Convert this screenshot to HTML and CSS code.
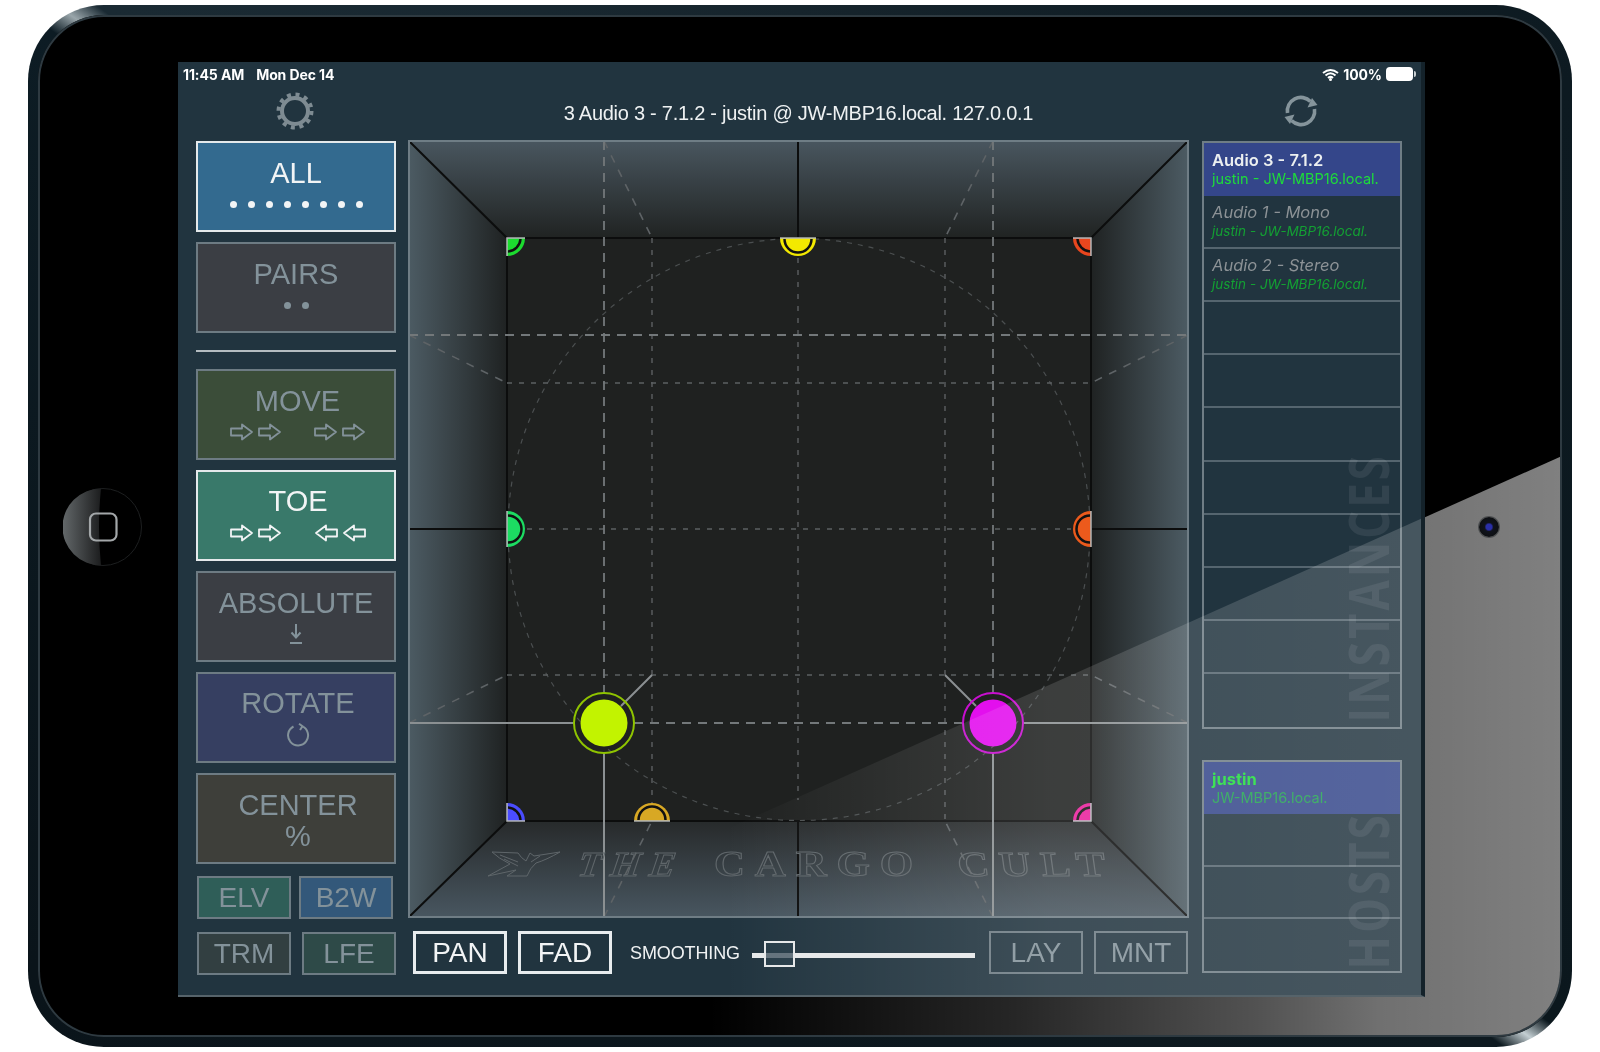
FILE: index.html
```html
<!DOCTYPE html>
<html lang="en">
<head>
<meta charset="utf-8">
<title>3D Panner</title>
<link rel="stylesheet" href="styles.css">
</head>
<body>
<div class="device">
  <div class="bezel">
    <div class="bezel-glare"></div>
    <div class="home-slot">
      <svg class="home" width="80" height="80" viewBox="0 0 80 80">
        <defs>
          <linearGradient id="homeGrad" x1="0" x2="1" y1="0" y2="0">
            <stop offset="0" stop-color="#63686a"/>
            <stop offset="1" stop-color="#1c1d1e"/>
          </linearGradient>
        </defs>
        <circle cx="40" cy="40" r="38.500" fill="#000" stroke="#1d1f20" stroke-width="1"/>
        <path d="M38 1.500 A38.500 38.500 0 0 0 38 78.500 Q34 40 38 1.500 Z" fill="url(#homeGrad)"/>
        <rect x="27" y="26.500" width="26.500" height="27" rx="6" fill="none" stroke="#a3a7a9" stroke-width="2.200"/>
      </svg>
    </div>
    <main class="screen">
      <header class="status">
        <div class="status-left"><span>11:45 AM</span><span>Mon Dec 14</span></div>
        <div class="status-right">
          <svg width="17" height="13" viewBox="0 0 17 13">
            <path d="M1 5 Q8.500 -1 16 5 M3.500 7.500 Q8.500 3 13.500 7.500 M6 10 Q8.500 7.800 11 10" fill="none" stroke="#fff" stroke-width="2"/>
            <circle cx="8.500" cy="11.500" r="1.500" fill="#fff"/>
          </svg>
          <span>100%</span>
          <span class="battery"></span>
        </div>
      </header>
      <div class="workspace">
        <div class="col-left">
          <div class="tool-icon">
            <svg width="38" height="38" viewBox="-19 -19 38 38">
              <circle r="13" fill="none" stroke="#7e8b92" stroke-width="4"/>
              <circle r="16.500" fill="none" stroke="#7e8b92" stroke-width="4" stroke-dasharray="4 4.640"/>
            </svg>
          </div>
          <div class="modes">
            <button class="mode all on"><span>ALL</span>
              <span class="glyphs dots"><i></i><i></i><i></i><i></i><i></i><i></i><i></i><i></i></span></button>
            <button class="mode pairs"><span>PAIRS</span>
              <span class="glyphs dots"><i></i><i></i></span></button>
            <div class="sep"></div>
            <button class="mode move"><span>MOVE</span>
              <span class="glyphs arrows">
                <svg width="136" height="18" viewBox="0 0 136 18"><defs><path id="arr" d="M1 5.500 H12 V1.500 L22 9 L12 16.500 V12.500 H1 Z" fill="none" stroke="currentColor" stroke-width="1.800" stroke-linejoin="round"/></defs>
                  <use href="#arr"/><use href="#arr" x="28"/><use href="#arr" x="84"/><use href="#arr" x="112"/></svg>
              </span></button>
            <button class="mode toe on shift"><span>TOE</span>
              <span class="glyphs arrows">
                <svg width="136" height="18" viewBox="0 0 136 18"><use href="#arr"/><use href="#arr" x="28"/><use href="#arr" transform="translate(108 0) scale(-1 1)"/><use href="#arr" transform="translate(136 0) scale(-1 1)"/></svg>
              </span></button>
            <button class="mode absolute"><span>ABSOLUTE</span>
              <span class="glyphs">
                <svg width="14" height="22" viewBox="0 0 14 22"><path d="M7 1 V14 M2.500 9.500 L7 14.500 L11.500 9.500 M1 20 H13" fill="none" stroke="currentColor" stroke-width="2"/></svg>
              </span></button>
            <button class="mode rotate shift"><span>ROTATE</span>
              <span class="glyphs">
                <svg width="24" height="24" viewBox="0 0 24 24"><path d="M7.500 3.500 A10 10 0 1 0 16 3.200 M13 0.800 L16.500 3.300 L14 7" fill="none" stroke="currentColor" stroke-width="2"/></svg>
              </span></button>
            <button class="mode center shift"><span>CENTER</span><span class="glyphs pct">%</span></button>
            <div class="mini-row first">
              <button class="mini elv">ELV</button>
              <button class="mini b2w">B2W</button>
            </div>
            <div class="mini-row second">
              <button class="mini trm">TRM</button>
              <button class="mini lfe">LFE</button>
            </div>
          </div>
        </div>

        <div class="col-center">
          <div class="title">3 Audio 3 - 7.1.2 - justin @ JW-MBP16.local. 127.0.0.1</div>
          <svg class="stage" width="779" height="776" viewBox="409 141 779 776">
            <defs>
              <linearGradient id="wallTop" x1="0" x2="0" y1="0" y2="1"><stop offset="0" stop-color="#49565f"/><stop offset="1" stop-color="#202322"/></linearGradient>
              <linearGradient id="wallBot" x1="0" x2="0" y1="0" y2="1"><stop offset="0" stop-color="#272a2b"/><stop offset="1" stop-color="#485660"/></linearGradient>
              <linearGradient id="wallL" x1="0" x2="1" y1="0" y2="0"><stop offset="0" stop-color="#4c5b63"/><stop offset="1" stop-color="#1f2222"/></linearGradient>
              <linearGradient id="wallR" x1="1" x2="0" y1="0" y2="0"><stop offset="0" stop-color="#4c5b63"/><stop offset="1" stop-color="#1f2222"/></linearGradient>
              <g id="q">
                <path d="M0 0 H18 A18 18 0 0 1 0 18 Z"/>
                <path d="M13.500 1 A13.500 13.500 0 0 1 1 13.500" fill="none" stroke="#111" stroke-width="2.500"/>
                <path d="M0 18 V0 H18" fill="none" stroke="#b5b8ba" stroke-width="1.500"/>
              </g>
              <g id="h">
                <path d="M-18 0 H18 A18 18 0 0 1 -18 0 Z"/>
                <path d="M-13.500 1 A13.500 13.500 0 0 0 13.500 1" fill="none" stroke="#111" stroke-width="2.500"/>
                <path d="M-18 0 H18" fill="none" stroke="#b5b8ba" stroke-width="1.500"/>
              </g>
            </defs>
            <rect x="507" y="238" width="584" height="583" fill="#1f2120"/>
            <polygon points="409,141 1188,141 1091,238 507,238" fill="url(#wallTop)"/>
            <polygon points="409,917 1188,917 1091,821 507,821" fill="url(#wallBot)"/>
            <polygon points="409,141 507,238 507,821 409,917" fill="url(#wallL)"/>
            <polygon points="1188,141 1091,238 1091,821 1188,917" fill="url(#wallR)"/>

            <g fill="none" stroke="#0c0d0d" stroke-width="2">
              <path d="M409 141 L507 238 M1188 141 L1091 238 M409 917 L507 821 M1188 917 L1091 821"/>
              <rect x="507" y="238" width="584" height="583"/>
              <path d="M798 141 V238 M798 821 V917 M409 529 H507 M1091 529 H1188"/>
            </g>

            <circle cx="799" cy="529.500" r="291" fill="none" stroke="#4b4f50" stroke-width="1.200" stroke-dasharray="5 6"/>

            <g fill="none" stroke="#5c6062" stroke-width="1.400" stroke-dasharray="5 7">
              <path d="M652 238 V821 M945 238 V821 M507 383 H1091 M507 675 H1091 M798 258 V800 M527 529 H1071"/>
            </g>
            <g fill="none" stroke="#5e6366" stroke-width="1.600" stroke-dasharray="8 8">
              <path d="M604 141 L652 238 M993 141 L945 238 M409 335 L507 383 M1188 335 L1091 383 M409 723 L507 675 M1188 723 L1091 675 M604 917 L652 821 M993 917 L945 821"/>
            </g>
            <g fill="none" stroke="#73787a" stroke-width="1.800" stroke-dasharray="9 7">
              <path d="M604 141 V693 M993 141 V693 M409 335 H1188 M634 723 H963"/>
            </g>
            <g fill="none" stroke="#8b9092" stroke-width="2">
              <path d="M409 723 H573 M1024 723 H1188 M604 753 V917 M993 753 V917 M621 706 L652 675 M976 706 L945 675"/>
            </g>

            <g class="logo">
              <path d="M492 852 L518 853 Q521 858 526 861 L530 853 L534 856 L560 852 Q546 860 536 863 Q530 868 527 876 L507 876 L516 870 L488 876 L510 864 Q498 858 492 852 Z M500 855 L518 862 M504 859 L518 866 M540 856 L531 862"/>
              <text x="577" y="876" textLength="106" lengthAdjust="spacingAndGlyphs" transform="translate(123 0) skewX(-8)" class="cult-word tilt">THE</text>
              <text x="714" y="876" textLength="209" lengthAdjust="spacingAndGlyphs" class="cult-word">CARGO</text>
              <text x="959" y="876" textLength="158" lengthAdjust="spacingAndGlyphs" transform="translate(-123 0) skewX(8)" class="cult-word">CULT</text>
            </g>

            <use href="#q" fill="#1cdc2f" transform="translate(507 238)"/>
            <use href="#h" fill="#f3e900" transform="translate(798 238)"/>
            <use href="#q" fill="#e8461e" transform="translate(1091 238) rotate(90)"/>
            <use href="#h" fill="#1cdc62" transform="translate(507 529) rotate(-90)"/>
            <use href="#h" fill="#ec5a1c" transform="translate(1091 529) rotate(90)"/>
            <use href="#q" fill="#4a4cff" transform="translate(507 821) rotate(-90)"/>
            <use href="#h" fill="#d8a824" transform="translate(652 821) rotate(180)"/>
            <use href="#q" fill="#ea1e9c" transform="translate(1091 821) rotate(180)"/>

            <circle cx="604" cy="723" r="30" fill="none" stroke="#8fc400" stroke-width="2"/>
            <circle cx="604" cy="723" r="23.500" fill="#c2f300"/>
            <circle cx="993" cy="723" r="30" fill="none" stroke="#c80fd0" stroke-width="2"/>
            <circle cx="993" cy="723" r="23.500" fill="#e30fee"/>
          </svg>
          <div class="transport">
            <button class="tbtn lit pan">PAN</button>
            <button class="tbtn lit fad">FAD</button>
            <span class="smooth-label">SMOOTHING</span>
            <div class="slider"><span class="thumb"></span></div>
            <button class="tbtn lay">LAY</button>
            <button class="tbtn mnt">MNT</button>
          </div>
        </div>

        <div class="col-right">
          <div class="tool-icon">
            <svg width="36" height="34" viewBox="-18 -17 36 34">
              <g fill="#85949b">
                <path d="M-13.500 2 A13.500 13.500 0 0 1 9.500 -9.500" fill="none" stroke="#85949b" stroke-width="3.600"/>
                <path d="M16.500 -6 L6.500 -3.500 L11 -13 Z"/>
                <path d="M13.500 -2 A13.500 13.500 0 0 1 -9.500 9.500" fill="none" stroke="#85949b" stroke-width="3.600"/>
                <path d="M-16.500 6 L-6.500 3.500 L-11 13 Z"/>
              </g>
            </svg>
          </div>
          <div class="panels">
            <section class="list instances">
              <span class="watermark wm-inst">INSTANCES</span>
              <div class="row selected"><strong>Audio 3 - 7.1.2</strong><small>justin - JW-MBP16.local.</small></div>
              <div class="row dim"><strong>Audio 1 - Mono</strong><small>justin - JW-MBP16.local.</small></div>
              <div class="row dim"><strong>Audio 2 - Stereo</strong><small>justin - JW-MBP16.local.</small></div>
              <div class="row"></div><div class="row"></div><div class="row"></div><div class="row"></div>
              <div class="row"></div><div class="row"></div><div class="row"></div><div class="row"></div>
            </section>
            <section class="list hosts">
              <span class="watermark wm-host">HOSTS</span>
              <div class="row selected host"><strong>justin</strong><small>JW-MBP16.local.</small></div>
              <div class="row"></div><div class="row"></div><div class="row"></div>
            </section>
          </div>
        </div>
      </div>
      <div class="screen-glare"></div>
    </main>
    <div class="camera-slot"><span class="camera"></span></div>
  </div>
</div>
</body>
</html>
```
FILE: styles.css
```css
* { box-sizing: border-box; }
html, body { margin: 0; background: #fff; }
body { width: 1600px; height: 1052px; overflow: hidden; font-family: "Liberation Sans", Arial, sans-serif; }

.device {
  width: 1544px;
  height: 1042px;
  margin: 5px 0 0 28px;
  padding: 10px;
  border-radius: 76px;
  background: conic-gradient(from 0deg at 50% 50%,
    #16242c 0deg, #0d1a21 60deg, #0b171d 123.500deg, #c3ced2 125deg, #0e1a20 126.500deg,
    #0a141a 240deg, #0d1c24 303.500deg, #9aa6ab 305deg, #1a2a33 306.500deg, #16242c 360deg);
}
.bezel {
  position: relative;
  height: 1022px;
  display: flex;
  align-items: flex-start;
  padding-top: 47px;
  border-radius: 66px;
  background: #000;
  overflow: hidden;
  box-shadow: inset 0 0 0 2px #2e3a41;
}
.bezel-glare {
  position: absolute;
  inset: 2px;
  border-radius: 64px;
  clip-path: polygon(1522px 439px, 222px 1020px, 1522px 1020px);
  background: linear-gradient(to left, rgba(255,255,255,.5) 0, rgba(255,255,255,.44) 12%, rgba(255,255,255,.32) 20%, rgba(255,255,255,.15) 36%, rgba(255,255,255,0) 56%);
}
.home-slot {
  position: relative;
  width: 140px;
  height: 935px;
  display: flex;
  align-items: center;
  padding: 0 0 6px 25px;
}
.camera-slot {
  position: relative;
  flex: 1;
  height: 935px;
  display: flex;
  align-items: center;
  padding: 0 0 6px 54px;
}
.camera {
  width: 20px;
  height: 20px;
  border-radius: 50%;
  background: radial-gradient(circle, #2a2fa8 0, #2a2fa8 20%, #10131c 32%, #0d0f12 70%, #3a3d40 100%);
  box-shadow: 0 0 0 1px #4e5052;
}

.screen {
  position: relative;
  width: 1247px;
  height: 935px;
  background: #21343f;
  border-right: 4px solid #14222a;
  border-bottom: 2px solid #56636a;
  color: #fff;
  filter: blur(.4px);
}
.screen-glare {
  position: absolute;
  inset: 0;
  pointer-events: none;
  clip-path: polygon(1247px 455px, 173px 935px, 1247px 935px);
  background: linear-gradient(to left, rgba(255,255,255,.17) 0, rgba(255,255,255,.13) 30%, rgba(255,255,255,.03) 50%, rgba(255,255,255,0) 56%);
}

.status {
  height: 24px;
  display: flex;
  justify-content: space-between;
  align-items: center;
  padding: 0 8px 0 5px;
  font: 700 14px "Inter", "Liberation Sans", sans-serif;
  letter-spacing: -.1px;
}
.status-left { display: flex; gap: 12px; }
.status-right { display: flex; align-items: center; gap: 4px; }
.battery {
  position: relative;
  width: 27px;
  height: 14px;
  border-radius: 4px;
  background: #fff;
}
.battery::after {
  content: "";
  position: absolute;
  right: -3px;
  top: 4px;
  width: 2px;
  height: 6px;
  border-radius: 0 2px 2px 0;
  background: #c8cfd2;
}

.workspace {
  display: grid;
  grid-template-columns: 231px 779px 233px;
}
.col-left { padding: 0 13px 0 18px; }
.col-right { padding: 0 19px 0 14px; }
.col-center { display: flex; flex-direction: column; }
.tool-icon {
  height: 55px;
  display: flex;
  align-items: center;
  justify-content: center;
  padding-bottom: 5px;
}
.col-left .tool-icon { padding-right: 3px; }
.col-right .tool-icon { padding-right: 2px; }
.title {
  height: 55px;
  text-align: center;
  font-size: 20px;
  line-height: 54px;
  letter-spacing: -.26px;
  color: #eef1f2;
}

.modes { display: flex; flex-direction: column; gap: 10px; }
button { font-family: inherit; margin: 0; padding: 0; }
.mode {
  height: 91px;
  display: flex;
  flex-direction: column;
  align-items: center;
  gap: 4px;
  padding-top: 15px;
  border: 2px solid #6d7b83;
  font-size: 29px;
  line-height: 30px;
  color: #83929a;
}
.mode.on { border-color: #e4e9eb; color: #f2f4f5; }
.shift { padding-left: 4px; }
.all { background: #336a8f; }
.pairs, .absolute { background: #3b3e44; }
.move { background: #3b4d39; padding-left: 3px; }
.toe { background: #39796a; padding-top: 14px; gap: 5px; }
.rotate { background: #363f61; padding-top: 14px; gap: 5px; }
.center { background: #3e3f3a; }
.glyphs { height: 24px; display: flex; align-items: center; justify-content: center; }
.dots { gap: 11px; }
.dots i { width: 7px; height: 7px; border-radius: 50%; background: currentColor; }
.pct { line-height: 24px; }
.sep { height: 2px; margin: 7px 0; background: #b4bcc0; }

.mini-row { display: flex; }
.mini-row.first { margin-top: 2px; padding-left: 1px; gap: 8px; }
.mini-row.second { margin-top: 3px; padding-left: 1px; gap: 11px; }
.mini {
  width: 94px;
  height: 43px;
  border: 2px solid #6d7b83;
  font-size: 28px;
  line-height: 38px;
  color: #83929a;
}
.elv { background: #2f5e58; }
.b2w { background: #33587a; }
.trm { background: #323f41; }
.lfe { background: #2e4a48; }

.stage { display: block; border: 0; outline: 2px solid #6f7d85; outline-offset: -1px; }
.logo { fill: none; stroke: #5f666a; stroke-width: 1; }
.cult-word { font: 700 35px "Liberation Serif", serif; letter-spacing: 8px; }
.tilt { font-style: italic; }

.transport {
  display: flex;
  align-items: center;
  margin-top: 14px;
  padding-left: 4px;
  height: 43px;
}
.tbtn {
  height: 43px;
  width: 94px;
  background: transparent;
  border: 2px solid #6d7b83;
  font-size: 28px;
  line-height: 38px;
  color: #83929a;
}
.tbtn.lit { border: 3px solid #e8ecee; color: #f2f4f5; }
.fad { margin-left: 11px; }
.smooth-label { margin: 1px 0 0 18px; width: 122px; font-size: 18px; letter-spacing: -.12px; color: #f0f2f3; }
.slider {
  position: relative;
  width: 223px;
  height: 5px;
  margin-top: 5px;
  background: #e6e8e9;
}
.thumb {
  position: absolute;
  left: 12px;
  top: -12px;
  width: 31px;
  height: 26px;
  border: 2px solid #e6e8e9;
  background: rgba(42,63,76,.7);
}
.lay { margin-left: 14px; }
.mnt { margin-left: 11px; }

.panels { display: flex; flex-direction: column; gap: 31px; }
.list {
  position: relative;
  display: grid;
  border: 2px solid #6f7d85;
}
.instances { height: 588px; grid-template-rows: repeat(11, 1fr); }
.hosts { height: 213px; grid-template-rows: repeat(4, 1fr); }
.row {
  display: flex;
  flex-direction: column;
  justify-content: center;
  min-height: 0;
  padding: 0 0 1px 8px;
  border-bottom: 2px solid #55656f;
  font-family: "Inter", "Liberation Sans", sans-serif;
}
.row:last-of-type { border-bottom: 0; }
.row strong { font-size: 16.500px; line-height: 20px; font-weight: 600; color: #eceff0; }
.row small { font-size: 14.500px; line-height: 18px; color: #1edc3a; }
.selected { background: #34468a; border-bottom: 0; }
.dim strong { font-weight: 400; font-style: italic; color: #8c9296; }
.dim small { font-size: 13.500px; font-style: italic; color: #13a033; }
.host strong { font-weight: 700; color: #1edc3a; }
.host small { color: #1fa14f; }

.watermark {
  position: absolute;
  writing-mode: vertical-rl;
  font: 700 56px/40px "Open Sans", sans-serif;
  letter-spacing: 4px;
  color: rgba(255,255,255,.08);
  white-space: nowrap;
  transform: rotate(180deg) scaleY(.78);
  transform-origin: 50% 50%;
  pointer-events: none;
}
.wm-inst { right: 13px; bottom: -33px; }
.wm-host { right: 13px; bottom: -21px; }
```
